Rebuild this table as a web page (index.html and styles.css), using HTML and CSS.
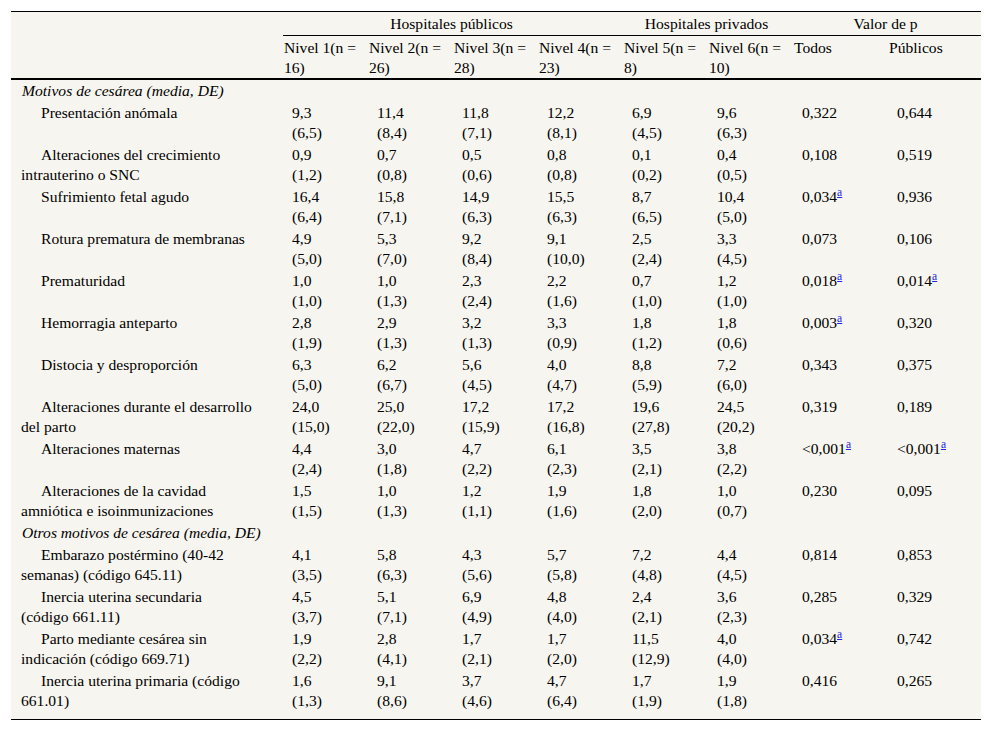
FILE: index.html
```html
<!DOCTYPE html>
<html lang="es">
<head>
<meta charset="utf-8">
<title>Motivos de cesárea</title>
<link rel="stylesheet" href="styles.css">
</head>
<body>
<div class="wrap">
<table class="data">
<colgroup>
<col class="c-label"><col class="c-n"><col class="c-n"><col class="c-n"><col class="c-n"><col class="c-n"><col class="c-n"><col class="c-todos"><col class="c-pub">
</colgroup>
<thead>
<tr class="h1">
<th class="blank" rowspan="2"></th>
<th class="group" colspan="4">Hospitales públicos</th>
<th class="group" colspan="2">Hospitales privados</th>
<th class="group" colspan="2">Valor de p</th>
</tr>
<tr class="h2">
<th>Nivel 1(n = 16)</th>
<th>Nivel 2(n = 26)</th>
<th>Nivel 3(n = 28)</th>
<th>Nivel 4(n = 23)</th>
<th>Nivel 5(n = 8)</th>
<th>Nivel 6(n = 10)</th>
<th>Todos</th>
<th class="pub">Públicos</th>
</tr>
</thead>
<tbody>
<tr class="section"><td colspan="9">Motivos de cesárea (media, DE)</td></tr>
<tr><td class="label">Presentación anómala</td><td>9,3<br>(6,5)</td><td>11,4<br>(8,4)</td><td>11,8<br>(7,1)</td><td>12,2<br>(8,1)</td><td>6,9<br>(4,5)</td><td>9,6<br>(6,3)</td><td>0,322</td><td>0,644</td></tr>
<tr><td class="label">Alteraciones del crecimiento intrauterino o SNC</td><td>0,9<br>(1,2)</td><td>0,7<br>(0,8)</td><td>0,5<br>(0,6)</td><td>0,8<br>(0,8)</td><td>0,1<br>(0,2)</td><td>0,4<br>(0,5)</td><td>0,108</td><td>0,519</td></tr>
<tr><td class="label">Sufrimiento fetal agudo</td><td>16,4<br>(6,4)</td><td>15,8<br>(7,1)</td><td>14,9<br>(6,3)</td><td>15,5<br>(6,3)</td><td>8,7<br>(6,5)</td><td>10,4<br>(5,0)</td><td>0,034<sup><a href="#">a</a></sup></td><td>0,936</td></tr>
<tr><td class="label">Rotura prematura de membranas</td><td>4,9<br>(5,0)</td><td>5,3<br>(7,0)</td><td>9,2<br>(8,4)</td><td>9,1<br>(10,0)</td><td>2,5<br>(2,4)</td><td>3,3<br>(4,5)</td><td>0,073</td><td>0,106</td></tr>
<tr><td class="label">Prematuridad</td><td>1,0<br>(1,0)</td><td>1,0<br>(1,3)</td><td>2,3<br>(2,4)</td><td>2,2<br>(1,6)</td><td>0,7<br>(1,0)</td><td>1,2<br>(1,0)</td><td>0,018<sup><a href="#">a</a></sup></td><td>0,014<sup><a href="#">a</a></sup></td></tr>
<tr><td class="label">Hemorragia anteparto</td><td>2,8<br>(1,9)</td><td>2,9<br>(1,3)</td><td>3,2<br>(1,3)</td><td>3,3<br>(0,9)</td><td>1,8<br>(1,2)</td><td>1,8<br>(0,6)</td><td>0,003<sup><a href="#">a</a></sup></td><td>0,320</td></tr>
<tr><td class="label">Distocia y desproporción</td><td>6,3<br>(5,0)</td><td>6,2<br>(6,7)</td><td>5,6<br>(4,5)</td><td>4,0<br>(4,7)</td><td>8,8<br>(5,9)</td><td>7,2<br>(6,0)</td><td>0,343</td><td>0,375</td></tr>
<tr><td class="label">Alteraciones durante el desarrollo del parto</td><td>24,0<br>(15,0)</td><td>25,0<br>(22,0)</td><td>17,2<br>(15,9)</td><td>17,2<br>(16,8)</td><td>19,6<br>(27,8)</td><td>24,5<br>(20,2)</td><td>0,319</td><td>0,189</td></tr>
<tr><td class="label">Alteraciones maternas</td><td>4,4<br>(2,4)</td><td>3,0<br>(1,8)</td><td>4,7<br>(2,2)</td><td>6,1<br>(2,3)</td><td>3,5<br>(2,1)</td><td>3,8<br>(2,2)</td><td>&lt;0,001<sup><a href="#">a</a></sup></td><td>&lt;0,001<sup><a href="#">a</a></sup></td></tr>
<tr><td class="label">Alteraciones de la cavidad amniótica e isoinmunizaciones</td><td>1,5<br>(1,5)</td><td>1,0<br>(1,3)</td><td>1,2<br>(1,1)</td><td>1,9<br>(1,6)</td><td>1,8<br>(2,0)</td><td>1,0<br>(0,7)</td><td>0,230</td><td>0,095</td></tr>
<tr class="section"><td colspan="9">Otros motivos de cesárea (media, DE)</td></tr>
<tr><td class="label">Embarazo postérmino (40-42 semanas) (código 645.11)</td><td>4,1<br>(3,5)</td><td>5,8<br>(6,3)</td><td>4,3<br>(5,6)</td><td>5,7<br>(5,8)</td><td>7,2<br>(4,8)</td><td>4,4<br>(4,5)</td><td>0,814</td><td>0,853</td></tr>
<tr><td class="label">Inercia uterina secundaria (código 661.11)</td><td>4,5<br>(3,7)</td><td>5,1<br>(7,1)</td><td>6,9<br>(4,9)</td><td>4,8<br>(4,0)</td><td>2,4<br>(2,1)</td><td>3,6<br>(2,3)</td><td>0,285</td><td>0,329</td></tr>
<tr><td class="label">Parto mediante cesárea sin indicación (código 669.71)</td><td>1,9<br>(2,2)</td><td>2,8<br>(4,1)</td><td>1,7<br>(2,1)</td><td>1,7<br>(2,0)</td><td>11,5<br>(12,9)</td><td>4,0<br>(4,0)</td><td>0,034<sup><a href="#">a</a></sup></td><td>0,742</td></tr>
<tr class="last"><td class="label">Inercia uterina primaria (código 661.01)</td><td>1,6<br>(1,3)</td><td>9,1<br>(8,6)</td><td>3,7<br>(4,6)</td><td>4,7<br>(6,4)</td><td>1,7<br>(1,9)</td><td>1,9<br>(1,8)</td><td>0,416</td><td>0,265</td></tr>
</tbody>
</table>
</div>
</body>
</html>
```
FILE: styles.css
```css
html, body {
  margin: 0;
  padding: 0;
  background: #ffffff;
}

.wrap {
  padding: 11px 11px 0 11px;
}

.data {
  width: 970px;
  table-layout: fixed;
  border-collapse: separate;
  border-spacing: 0;
  background: #f7f5ef;
  font-family: "Liberation Serif", "Times New Roman", serif;
  font-size: 15.6px;
  line-height: 20px;
  color: #000;
}

.c-label { width: 272px; }
.c-n { width: 85px; }
.c-todos { width: 95px; }
.c-pub { width: 93px; }

.data th {
  font-weight: normal;
  text-align: left;
  vertical-align: top;
  padding: 2px 4px 0 1px;
}

.data .h1 th {
  border-top: 1px solid #000;
  padding-bottom: 1px;
}

.data .h1 th.group {
  text-align: center;
  border-bottom: 1px solid #000;
}

.data th.blank {
  border-bottom: 2px solid #000;
}

.data .h2 th {
  border-bottom: 2px solid #000;
}

.data td {
  vertical-align: top;
  padding: 1px 4px 1px 9px;
}

.data td.label {
  padding: 1px 30px 1px 10px;
  text-indent: 20px;
}

.data .section td {
  font-style: italic;
  padding-left: 11px;
}

.data .last td {
  padding-bottom: 8px;
  border-bottom: 1px solid #000;
}

.data sup {
  font-size: 11.5px;
  line-height: 0;
  vertical-align: 6px;
}

.data sup a {
  color: #2323e8;
  text-decoration: underline;
}
```
